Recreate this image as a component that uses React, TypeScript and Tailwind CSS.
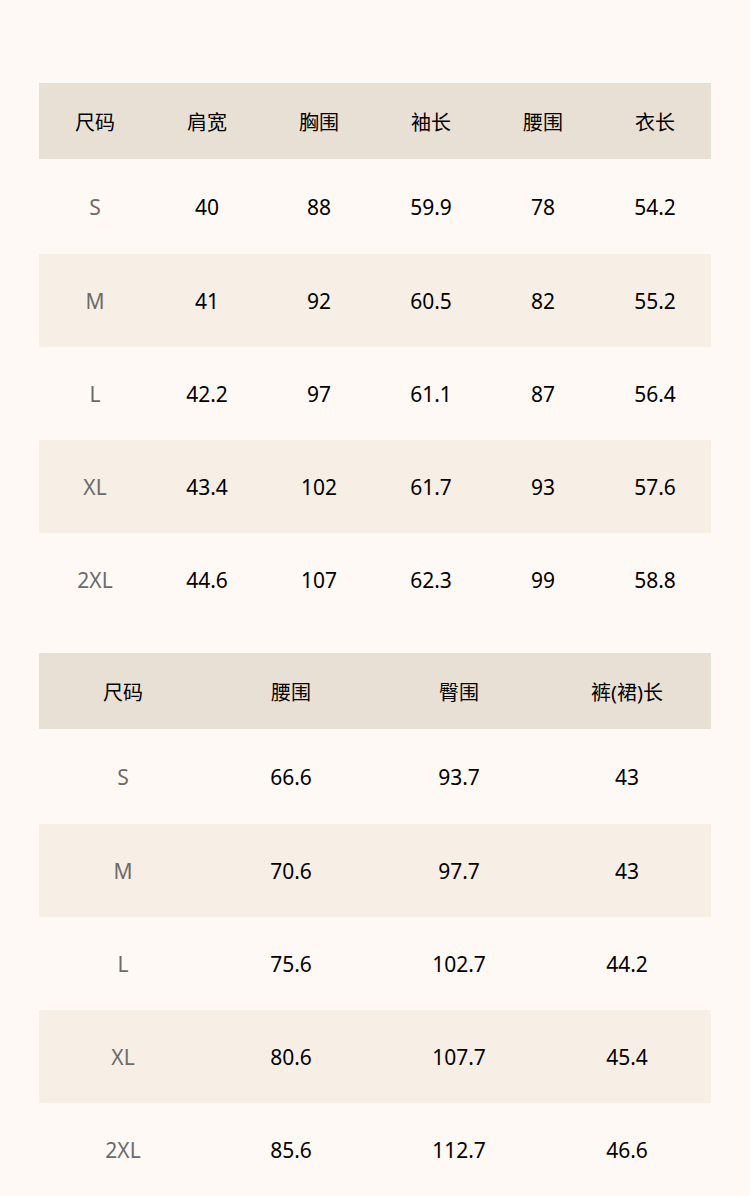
import React from "react";

const t1Head = ["尺码", "肩宽", "胸围", "袖长", "腰围", "衣长"];
const t1Rows = [
  ["S", "40", "88", "59.9", "78", "54.2"],
  ["M", "41", "92", "60.5", "82", "55.2"],
  ["L", "42.2", "97", "61.1", "87", "56.4"],
  ["XL", "43.4", "102", "61.7", "93", "57.6"],
  ["2XL", "44.6", "107", "62.3", "99", "58.8"],
];
const t2Head = ["尺码", "腰围", "臀围", "裤(裙)长"];
const t2Rows = [
  ["S", "66.6", "93.7", "43"],
  ["M", "70.6", "97.7", "43"],
  ["L", "75.6", "102.7", "44.2"],
  ["XL", "80.6", "107.7", "45.4"],
  ["2XL", "85.6", "112.7", "46.6"],
];

function Table({ head, rows, cols }: { head: string[]; rows: string[][]; cols: string }) {
  return (
    <div className="w-[672px]">
      <div className={`grid ${cols} h-[76px] items-center bg-[#e9e0d5] pt-[3px]`}>
        {head.map((h, i) => (
          <div key={i} className="text-center text-[20px] text-black">
            {h}
          </div>
        ))}
      </div>
      {rows.map((r, ri) => (
        <div
          key={ri}
          className={`grid ${cols} items-center pt-[2px] ${ri === 0 ? "h-[95px]" : "h-[93px]"} ${
            ri % 2 === 1 ? "bg-[#f7efe5]" : "bg-transparent"
          }`}
        >
          {r.map((c, ci) => (
            <div
              key={ci}
              className={`text-center text-[21px] ${ci === 0 ? "text-[#6b6b6b]" : "text-black"}`}
            >
              {c}
            </div>
          ))}
        </div>
      ))}
    </div>
  );
}

export default function App() {
  return (
    <div
      className="w-[750px] h-[1196px] bg-[#fff9f5] pt-[83px] pl-[39px] overflow-hidden"
      style={{ fontFamily: '"Noto Sans", "Noto Sans CJK SC", sans-serif' }}
    >
      <Table head={t1Head} rows={t1Rows} cols="grid-cols-6" />
      <div className="h-[27px]" />
      <Table head={t2Head} rows={t2Rows} cols="grid-cols-4" />
    </div>
  );
}
